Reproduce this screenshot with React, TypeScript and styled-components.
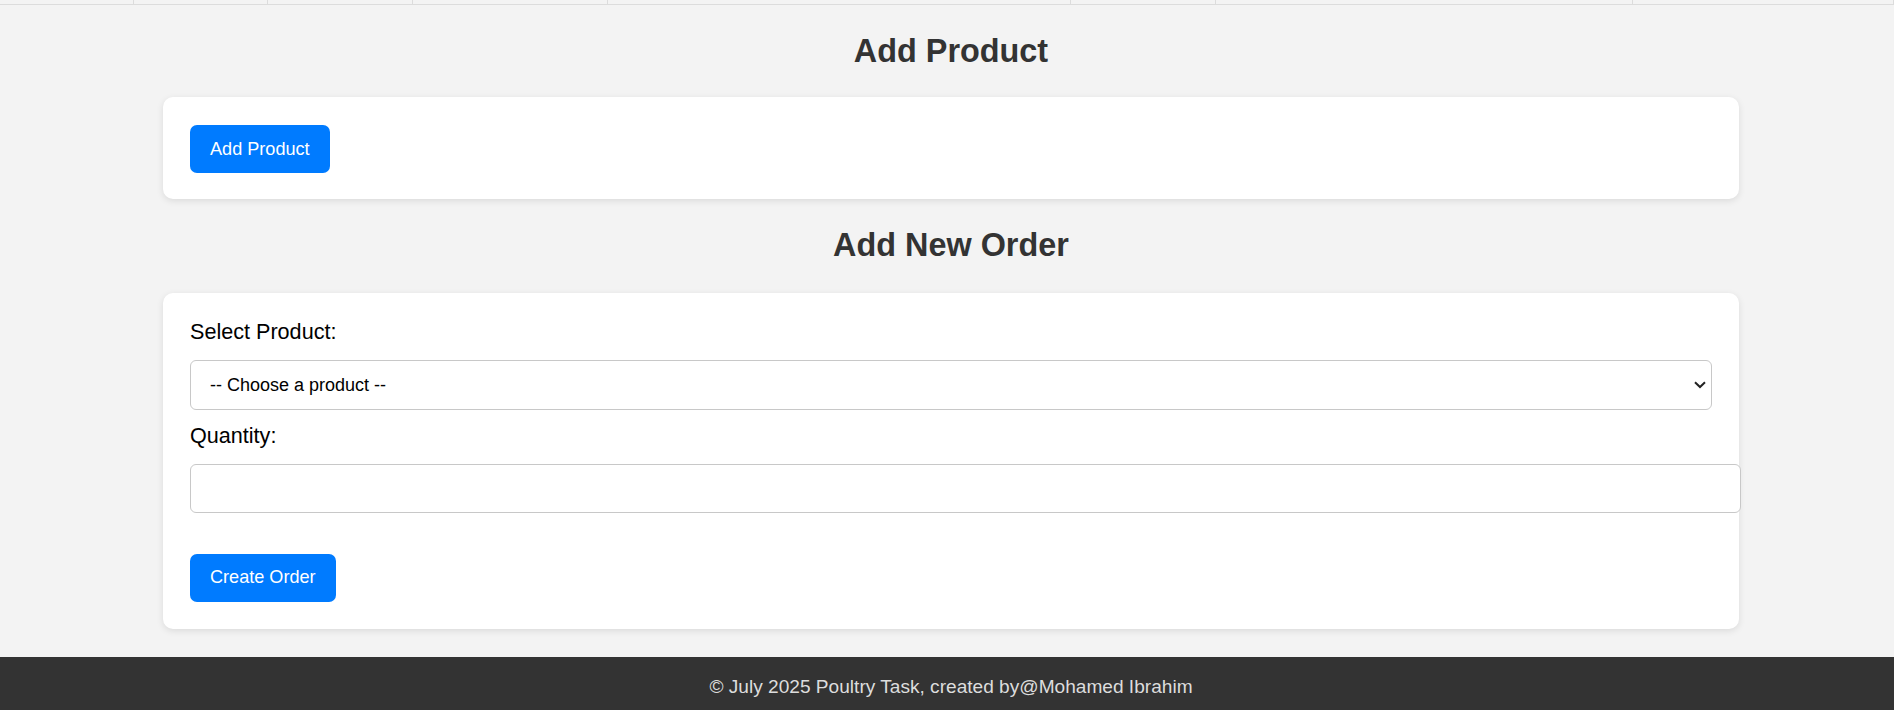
import styled, { createGlobalStyle } from 'styled-components';

const GlobalStyle = createGlobalStyle`
  html, body {
    margin: 0;
    padding: 0;
    background: #f3f3f3;
    font-family: "Liberation Sans", Arial, sans-serif;
    overflow: hidden;
  }
`;

const cellEdges = [134, 268, 413, 608, 1071, 1216, 1633, 1894];

export default function App() {
  return (
    <Page>
      <GlobalStyle />
      <TableTail>
        {cellEdges.map((edge, i) => (
          <TailCell key={edge} $w={edge - (i === 0 ? 0 : cellEdges[i - 1])} />
        ))}
      </TableTail>
      <Main>
        <Heading $top={27.5} $bottom={27.5}>Add Product</Heading>
        <Card $pad="28px 27px 26px">
          <Button type="button">Add Product</Button>
        </Card>

        <Heading $top={28} $bottom={28.5}>Add New Order</Heading>
        <Card $pad="26px 27px 27px">
          <Label htmlFor="product">Select Product:</Label>
          <SelectWrap>
            <Select id="product" defaultValue="">
              <option value="">-- Choose a product --</option>
            </Select>
            <Chevron viewBox="0 0 12 8" aria-hidden="true">
              <path d="M1 1.2 L6 6 L11 1.2" />
            </Chevron>
          </SelectWrap>
          <Label htmlFor="qty">Quantity:</Label>
          <QtyInput id="qty" type="number" />
          <Button type="button">Create Order</Button>
        </Card>
      </Main>
      <Footer>© July 2025 Poultry Task, created by@Mohamed Ibrahim</Footer>
    </Page>
  );
}

const Page = styled.div`
  width: 1894px;
  min-height: 710px;
  display: flex;
  flex-direction: column;
`;

const TableTail = styled.div`
  display: flex;
  height: 4px;
  border-bottom: 1px solid #dcdcdc;
`;

const TailCell = styled.div<{ $w: number }>`
  width: ${(p) => p.$w}px;
  flex: none;
  box-sizing: border-box;
  border-right: 1px solid #dcdcdc;
`;

const Main = styled.main`
  display: flex;
  flex-direction: column;
  padding: 0 155px 0 163px;
`;

const Heading = styled.h2<{ $top: number; $bottom: number }>`
  margin: ${(p) => p.$top}px 0 ${(p) => p.$bottom}px;
  text-align: center;
  color: #333;
  font-size: 32.4px;
  line-height: 37px;
  font-weight: bold;
`;

const Card = styled.section<{ $pad: string }>`
  background: #fff;
  border-radius: 10px;
  padding: ${(p) => p.$pad};
  box-shadow: 0 2px 7px rgba(0, 0, 0, 0.1);
  display: flex;
  flex-direction: column;
  align-items: flex-start;
`;

const Button = styled.button`
  background: #007bff;
  color: #fff;
  border: none;
  border-radius: 7px;
  height: 48px;
  padding: 0 20px;
  font-family: "Liberation Sans", Arial, sans-serif;
  font-size: 18.1px;
  cursor: pointer;
`;

const Label = styled.label`
  display: block;
  font-size: 21.6px;
  line-height: 25px;
  color: #000;
  margin-bottom: 16px;
`;

const SelectWrap = styled.div`
  position: relative;
  width: 100%;
  margin-bottom: 13px;
`;

const Select = styled.select`
  appearance: none;
  width: 100%;
  height: 50px;
  box-sizing: border-box;
  border: 1px solid #c8c8c8;
  border-radius: 6px;
  background: #fff;
  padding: 0 19px;
  font-family: "Liberation Sans", Arial, sans-serif;
  font-size: 18px;
  color: #000;
`;

const Chevron = styled.svg`
  position: absolute;
  right: 6px;
  top: 21px;
  width: 12px;
  height: 8px;
  fill: none;
  stroke: #222;
  stroke-width: 2;
  pointer-events: none;
`;

const QtyInput = styled.input`
  width: calc(100% + 29px);
  height: 49px;
  box-sizing: border-box;
  border: 1px solid #c8c8c8;
  border-radius: 6px;
  padding: 0 13px;
  font-size: 18px;
  margin-bottom: 41px;
  background: #fff;
`;

const Footer = styled.footer`
  margin-top: 28px;
  background: #333;
  color: #ddd;
  text-align: center;
  font-size: 19.1px;
  padding: 19px 0 16px 8px;
`;
